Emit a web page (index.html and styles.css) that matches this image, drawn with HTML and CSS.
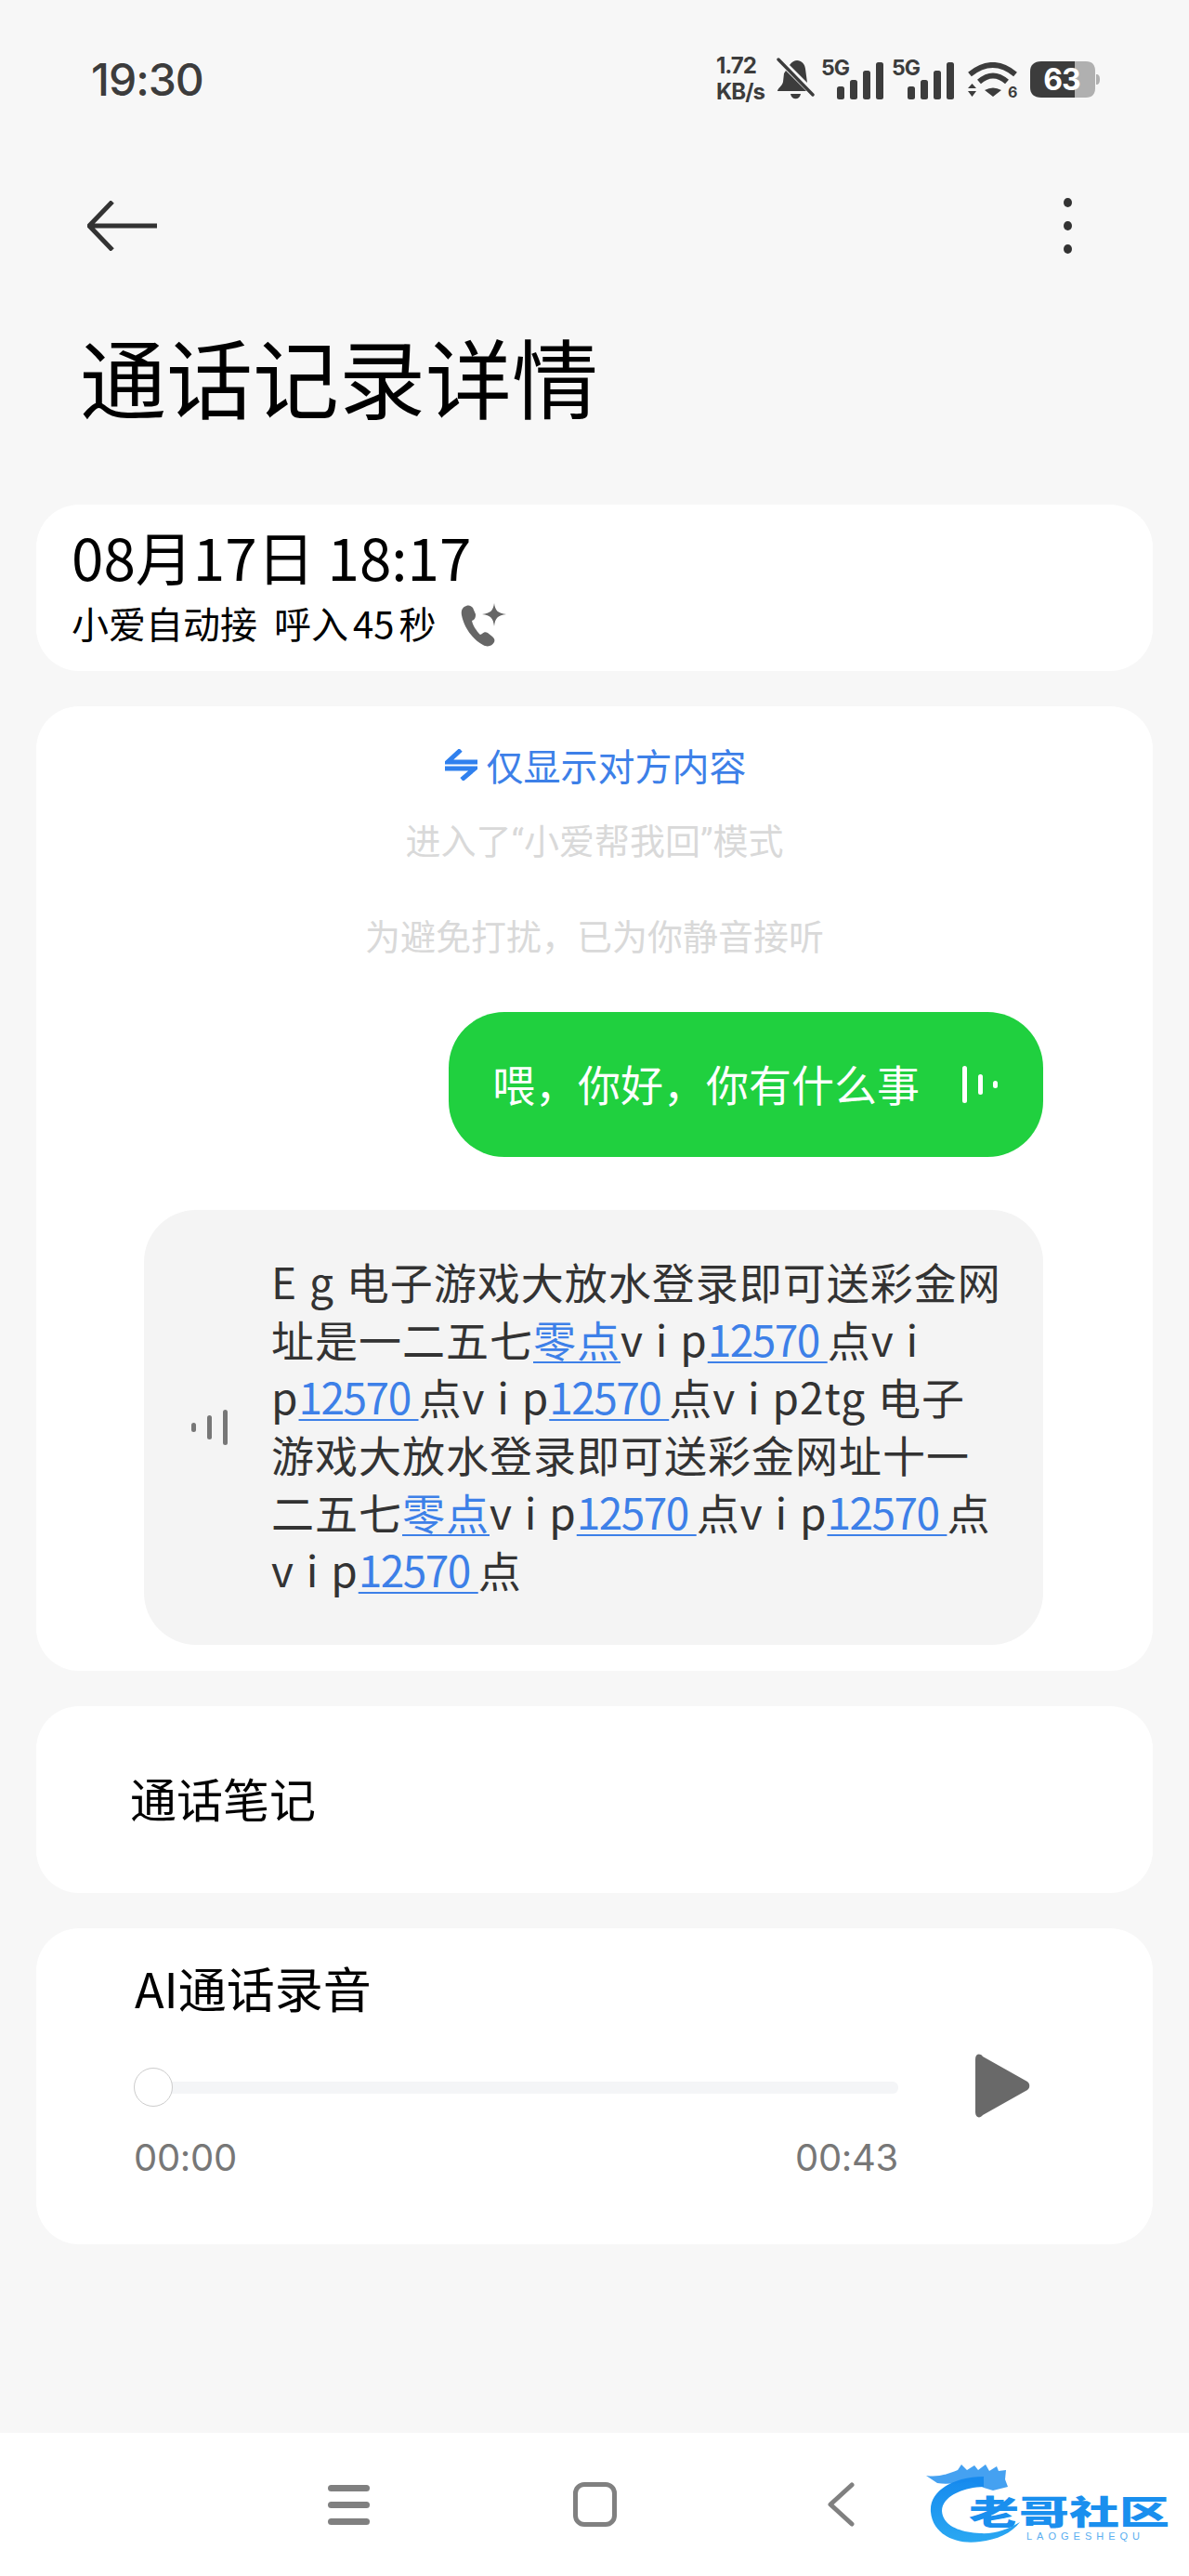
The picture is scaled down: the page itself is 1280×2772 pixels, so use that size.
FILE: index.html
```html
<!DOCTYPE html>
<html lang="zh-CN">
<head>
<meta charset="utf-8">
<title>通话记录详情</title>
<link rel="stylesheet" href="styles.css">
</head>
<body>
<div class="page">
  <div class="status">
    <span class="clock">19:30</span>
    <div class="status-icons">
      <div class="speed"><span>1.72</span><span>KB/s</span></div>
      <svg class="bell" width="41" height="46" viewBox="0 0 41 46"><path d="M10 14 L32 36 H1 C1 33 6 31 7 26 L8 17 Z M14 8 C20 -1 30 3 31 12 L33 27 Z M15 39 H26 C25 46 16 46 15 39 Z" fill="#3c3c3c"/><path d="M2 2 L39 40" stroke="#3c3c3c" stroke-width="3.4" stroke-linecap="round"/></svg>
      <svg class="sim" width="67" height="54" viewBox="0 -10 67 54"><text x="0" y="18" class="sim-label">5G</text><rect x="17" y="30" width="8" height="14" rx="2.5"/><rect x="31" y="23" width="8" height="21" rx="2.5"/><rect x="45" y="13" width="8" height="31" rx="2.5"/><rect x="59" y="4" width="8" height="40" rx="2.5"/></svg>
      <svg class="sim sim-second" width="67" height="54" viewBox="0 -10 67 54"><text x="0" y="18" class="sim-label">5G</text><rect x="17" y="30" width="8" height="14" rx="2.5"/><rect x="31" y="23" width="8" height="21" rx="2.5"/><rect x="45" y="13" width="8" height="31" rx="2.5"/><rect x="59" y="4" width="8" height="40" rx="2.5"/></svg>
      <svg class="wifi" width="56" height="46" viewBox="0 0 56 46"><path d="M2 13 Q27 -7 51 13" fill="none" stroke="#3c3c3c" stroke-width="6"/><path d="M12 21 Q27 8 42 21" fill="none" stroke="#3c3c3c" stroke-width="6"/><path d="M18 30 Q27 25 36 30 L27 37 Z M0 28 L4.500 23 L9 28 Z M0 31 H9 L4.500 37 Z" fill="#3c3c3c"/><text x="43" y="38" class="wifi-six">6</text></svg>
      <svg class="battery" width="75" height="39" viewBox="0 0 75 39"><path d="M48 0 H60 C67 0 70 4 70 10 V29 C70 35 67 39 60 39 H48 Z M71 14 C74 14 75 16 75 19 C75 23 74 25 71 25 Z" fill="#b0b0b0"/><path d="M48 0 V39 H12 C4 39 0 35 0 28 V11 C0 4 4 0 12 0 Z" fill="#3c3c3c"/><text x="34" y="31" class="battery-level">63</text></svg>
    </div>
  </div>

  <div class="toolbar">
    <svg width="75" height="54" viewBox="0 0 75 54"><path d="M27 1 L2 27 L27 53 M2 27 H75" fill="none" stroke="#333" stroke-width="5" stroke-linejoin="round"/></svg>
    <div class="more"><i></i><i></i><i></i></div>
  </div>

  <h1 class="title">通话记录详情</h1>

  <main class="cards">
    <section class="card card-date">
      <div class="date">08月17日 18:17</div>
      <div class="call-meta">
        <span>小爱自动接 呼入<span class="count">45</span>秒</span>
        <svg width="50" height="48" viewBox="0 0 50 48"><path d="M7 3 C3 4 1 8 2 13 C4 24 12 38 25 45 C30 48 35 46 37 42 C38 39 37 38 35 36 L30 32 C28 31 26 31 24 33 L22 34 C18 30 14 24 13 19 L15 18 C17 16 17 14 17 12 L14 5 C12 3 10 2 7 3 Z" fill="#666"/><path d="M37 0 C38 8 41 11 50 12 C41 13 38 16 37 25 C36 16 33 13 24 12 C33 11 36 8 37 0 Z" fill="#666"/></svg>
      </div>
    </section>

    <section class="card card-chat">
      <div class="toggle">
        <svg width="35" height="34" viewBox="0 0 35 34"><path d="M35 14 H3 L17 1 M0 21 H32 L18 33" fill="none" stroke="#2f80ee" stroke-width="5"/></svg>
        <span>仅显示对方内容</span>
      </div>
      <p class="sys sys-first">进入了<span class="q">“</span>小爱帮我回<span class="q">”</span>模式</p>
      <p class="sys sys-second">为避免打扰，已为你静音接听</p>
      <div class="bubble-out">
        <span class="bubble-text">喂，你好，你有什么事</span>
        <svg width="38" height="40" viewBox="0 0 38 40"><rect x="0" y="0" width="5" height="40" rx="2.500" fill="#fff"/><rect x="17" y="9" width="5" height="22" rx="2.500" fill="#fff"/><rect x="33" y="16" width="5" height="8" rx="2.500" fill="#fff"/></svg>
      </div>
      <div class="bubble-in">
        <svg width="39" height="38" viewBox="0 0 39 38"><rect x="0" y="14" width="5" height="10" rx="2.500" fill="#777"/><rect x="17" y="6" width="5" height="26" rx="2.500" fill="#777"/><rect x="34" y="0" width="5" height="38" rx="2.500" fill="#777"/></svg>
        <p class="transcript">E g 电子游戏大放水登录即可送彩金网<br>址是一二五七<a>零点</a>v i p<a class="num">12570 </a>点v i<br>p<a class="num">12570 </a>点v i p<a class="num">12570 </a>点v i p2tg 电子<br>游戏大放水登录即可送彩金网址十一<br>二五七<a>零点</a>v i p<a class="num">12570 </a>点v i p<a class="num">12570 </a>点<br>v i p<a class="num">12570 </a>点</p>
      </div>
    </section>

    <section class="card card-notes"><span class="notes-label">通话笔记</span></section>

    <section class="card card-audio">
      <div class="audio-title">AI通话录音</div>
      <div class="player">
        <div class="timeline">
          <div class="track"><span class="knob"></span></div>
          <div class="times"><span>00:00</span><span>00:43</span></div>
        </div>
        <svg class="play" width="60" height="69" viewBox="0 0 60 69"><path d="M1 6 C1 0 6 -1 9 3 L57 30 C60 32 60 37 57 39 L9 66 C6 70 1 69 1 63 Z" fill="#696969"/></svg>
      </div>
    </section>
  </main>

  <nav class="navbar">
    <div class="nav-cell"><div class="menu"><i></i><i></i><i></i></div></div>
    <div class="nav-cell"><div class="home"></div></div>
    <div class="nav-cell"><svg width="30" height="48" viewBox="0 0 30 48"><path d="M27 3 L4 24 L27 45" fill="none" stroke="#808080" stroke-width="5" stroke-linecap="round" stroke-linejoin="round"/></svg></div>
    <svg class="logo" width="263" height="92" viewBox="0 0 263 92">
      <defs><linearGradient id="lg" x1="0" y1="0" x2="0" y2="1"><stop offset="0" stop-color="#1689ee"/><stop offset="1" stop-color="#2aa8f2"/></linearGradient></defs>
      <path d="M62 15 C30 15 3 30 5 53 C7 77 32 89 58 85 C76 83 92 76 101 64 C88 72 74 77 58 76 C36 75 18 68 17 52 C17 38 36 27 62 26 Z" fill="url(#lg)"/>
      <path d="M0 14 C14 16 24 12 34 8 L38 2 L44 8 L52 3 L56 8 L64 2 L68 9 L76 4 L78 9 L86 8 L85 18 L88 26 L72 30 L62 27 L48 20 C34 22 22 24 12 22 Z" fill="#1689ee" opacity=".8"/>
      <g transform="translate(46 67) scale(1.5 1)"><text class="logo-cn" x="0" y="0">老哥社区</text></g>
      <text class="logo-en" x="108" y="83">LAOGESHEQU</text>
    </svg>
  </nav>
</div>
</body>
</html>
```

FILE: styles.css
```css
* { box-sizing: border-box; }
html, body { margin: 0; padding: 0; }
body {
  background: #f7f7f7;
  font-family: "Noto Sans CJK SC", "Noto Sans", sans-serif;
  color: #000;
}
p, h1 { margin: 0; }
.page { height: 2772px; display: flex; flex-direction: column; }

.status {
  height: 170px;
  padding: 0 96px 0 98px;
  display: flex;
  align-items: center;
  justify-content: space-between;
}
.clock { font-family: Inter, sans-serif; font-size: 48px; font-weight: 500; color: #3c3c3c; letter-spacing: -1px; }
.status-icons { display: flex; align-items: center; }
.speed {
  display: flex; flex-direction: column;
  font-family: Inter, sans-serif; font-weight: 700; font-size: 24px; line-height: 28px;
  color: #3c3c3c; width: 51px; align-items: flex-start; letter-spacing: -1px;
}
.bell { margin-left: 14px; }
.sim { margin-left: 7px; margin-bottom: 10px; fill: #3c3c3c; }
.sim-second { margin-left: 9px; }
.sim-label { font-family: Inter, sans-serif; font-weight: 700; font-size: 23px; letter-spacing: -1px; }
.wifi { margin-left: 15px; margin-right: -3px; margin-top: 10px; }
.wifi-six { font-family: Inter, sans-serif; font-weight: 700; font-size: 16px; fill: #3c3c3c; }
.battery { margin-left: 14px; }
.battery-level { font-family: Inter, sans-serif; font-weight: 700; font-size: 32px; fill: #fff; text-anchor: middle; letter-spacing: -1px; }

.toolbar {
  height: 146px;
  padding: 0 126px 0 94px;
  display: flex;
  align-items: center;
  justify-content: space-between;
}
.more { display: flex; flex-direction: column; gap: 15px; }
.more i { display: block; width: 9px; height: 10px; border-radius: 50%; background: #333; }

.title {
  height: 227px;
  padding: 22px 0 0 86px;
  font-size: 93px;
  font-weight: 400;
  line-height: 132px;
}

.cards { flex: 1; padding: 0 39px; display: flex; flex-direction: column; gap: 38px; }
.card { background: #fff; border-radius: 46px; }

.card-date { height: 179px; padding: 20px 0 0 38px; }
.date { font-size: 62px; line-height: 70px; letter-spacing: 0; }
.call-meta { margin-top: 10px; display: flex; align-items: center; gap: 26px; font-size: 40px; line-height: 52px; word-spacing: 9px; }
.count { margin: 0 5px; }
.call-meta svg { margin-top: 6px; }

.card-chat { height: 1038px; padding-top: 38px; display: flex; flex-direction: column; }
.toggle {
  height: 50px;
  display: flex; align-items: center; justify-content: center;
  gap: 10px;
  font-size: 40px; color: #3d80e8;
  margin-left: 2px;
}
.sys { height: 50px; font-size: 38px; line-height: 50px; text-align: center; color: #d9d9d9; }
.sys-first { margin-top: 30px; }
.sys-second { margin-top: 53px; }
.q { font-family: Roboto, sans-serif; }
.bubble-out {
  align-self: flex-end;
  margin: 58px 118px 0 0;
  width: 640px; height: 156px;
  border-radius: 60px;
  background: #20d03f;
  color: #fff;
  font-size: 46px;
  display: flex; align-items: center; justify-content: space-between;
  padding: 0 49px 0 47px;
}
.bubble-text { margin-top: -4px; }
.bubble-in {
  margin: 57px 118px 0 116px;
  height: 468px;
  border-radius: 56px;
  background: #f4f4f4;
  display: flex; align-items: center;
  padding-left: 51px;
  gap: 47px;
}
.transcript { font-size: 46px; letter-spacing: 1px; line-height: 62px; color: #333; white-space: pre; word-spacing: 1.500px; margin-top: -6px; }
.transcript a { color: #3d80e8; text-decoration: underline; text-decoration-thickness: 2px; text-underline-offset: 5px; }
.transcript .num { letter-spacing: -1.500px; word-spacing: 0; }

.card-notes {
  height: 201px;
  padding-left: 101px;
  display: flex; align-items: center;
  font-size: 50px;
}
.notes-label { margin-top: -6px; }
.card-audio { height: 340px; padding: 29px 0 0 106px; }
.audio-title { font-size: 52px; line-height: 70px; }
.player { display: flex; align-items: flex-start; margin-top: 45px; }
.timeline { width: 822px; }
.track {
  height: 13px; margin-top: 21px;
  background: #f4f5f7; border-radius: 6px;
  position: relative;
}
.knob {
  position: absolute; left: -1px; top: -15px;
  width: 42px; height: 42px;
  border-radius: 50%; background: #fff; border: 1px solid #ccc;
}
.times {
  margin-top: 45px;
  margin-left: -1px;
  display: flex; justify-content: space-between;
  font-family: Inter, sans-serif; font-size: 40px; line-height: 48px; color: #777;
  letter-spacing: -.3px;
}
.play { margin-left: 82px; margin-top: -9px; }

.navbar {
  height: 154px;
  background: #fff;
  display: flex; align-items: center; justify-content: center;
  position: relative;
}
.nav-cell { width: 265px; display: flex; justify-content: center; align-items: center; }
.menu { display: flex; flex-direction: column; gap: 11px; width: 45px; }
.menu i { display: block; height: 7px; border-radius: 4px; background: #808080; }
.home { width: 47px; height: 48px; border: 5px solid #808080; border-radius: 12px; }
.logo { position: absolute; left: 997px; top: 32px; }
.logo-cn { font-family: "Noto Sans CJK SC", sans-serif; font-weight: 900; font-size: 36px; fill: #1a8fee; }
.logo-en { font-family: "Liberation Sans", sans-serif; font-size: 11px; letter-spacing: 5px; fill: #5aaef0; }
```
